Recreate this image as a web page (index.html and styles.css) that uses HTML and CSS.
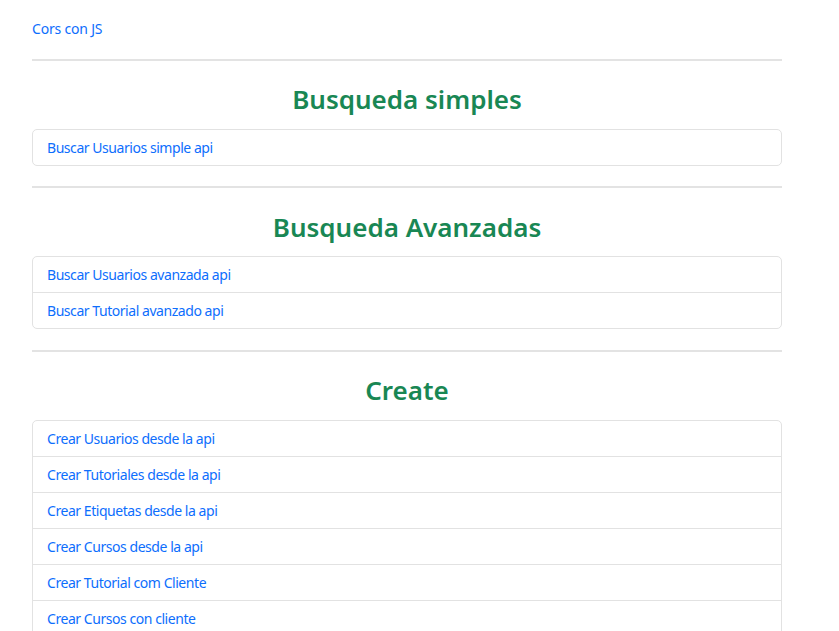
FILE: index.html
```html
<!DOCTYPE html>
<html lang="es">
<head>
<meta charset="utf-8">
<title>Cors con JS</title>
<link rel="stylesheet" href="styles.css">
</head>
<body>
<div class="container">
  <div class="top"><a href="#">Cors con JS</a></div>
  <hr class="sep sep-first">
  <h2 class="title">Busqueda simples</h2>
  <ul class="list">
    <li class="item"><a href="#">Buscar Usuarios simple api</a></li>
  </ul>
  <hr class="sep">
  <h2 class="title">Busqueda Avanzadas</h2>
  <ul class="list">
    <li class="item"><a href="#">Buscar Usuarios avanzada api</a></li>
    <li class="item"><a href="#">Buscar Tutorial avanzado api</a></li>
  </ul>
  <hr class="sep">
  <h2 class="title">Create</h2>
  <ul class="list">
    <li class="item"><a href="#">Crear Usuarios desde la api</a></li>
    <li class="item"><a href="#">Crear Tutoriales desde la api</a></li>
    <li class="item"><a href="#">Crear Etiquetas desde la api</a></li>
    <li class="item"><a href="#">Crear Cursos desde la api</a></li>
    <li class="item"><a href="#">Crear Tutorial com Cliente</a></li>
    <li class="item"><a href="#">Crear Cursos con cliente</a></li>
  </ul>
</div>
</body>
</html>
```
FILE: styles.css
```css
html, body {
  margin: 0;
  padding: 0;
  background: #fff;
}
body {
  font-family: "Noto Sans", "Open Sans", sans-serif;
  font-size: 14px;
  line-height: 21px;
  color: #212529;
}
a {
  color: #0d6efd;
  text-decoration: none;
  letter-spacing: -0.45px;
}
.container {
  width: 750px;
  margin-left: 32px;
  padding-top: 17.5px;
}
.top {
  line-height: 21px;
}
.top a {
  letter-spacing: -0.2px;
}
.sep {
  border: 0;
  height: 2px;
  background: #e3e3e3;
  margin: 20.5px 0;
}
.sep-first {
  margin-bottom: 20px;
}
.title {
  margin: 0 0 13.5px;
  padding-top: 3px;
  text-align: center;
  font-size: 26px;
  line-height: 31px;
  font-weight: 600;
  color: #198754;
}
.list {
  list-style: none;
  margin: 0;
  padding: 0;
  border: 1px solid #e2e2e2;
  border-radius: 5px;
}
.item {
  padding: 7px 14px;
  line-height: 21px;
  border-top: 1px solid #e2e2e2;
}
.item:first-child {
  border-top: 0;
}
```
